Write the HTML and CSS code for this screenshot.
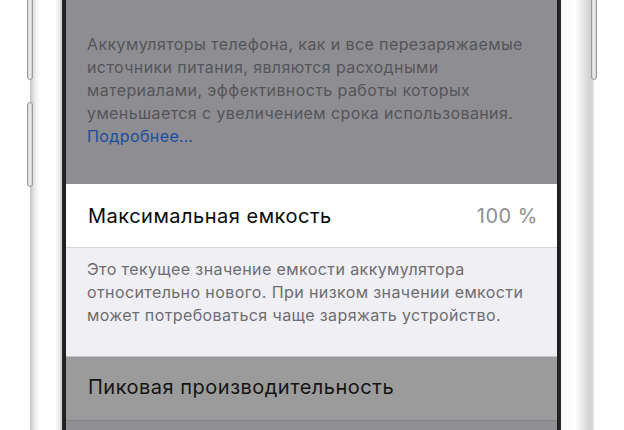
FILE: index.html
```html
<!DOCTYPE html>
<html lang="ru">
<head>
<meta charset="utf-8">
<title>Состояние аккумулятора</title>
<link rel="stylesheet" href="styles.css">
</head>
<body>
<div class="phone">
  <div class="rail rail-left">
    <div class="hw-btn hw-btn-top"></div>
    <div class="hw-btn hw-btn-mid"></div>
  </div>
  <div class="rim rim-left"></div>
  <div class="screen">
    <section class="dim-info">
      <p class="info-text">Аккумуляторы телефона, как и все перезаряжаемые источники питания, являются расходными материалами, эффективность работы которых уменьшается с увеличением срока использования.</p>
      <a class="info-link" href="#">Подробнее…</a>
    </section>
    <div class="cell cell-lit">
      <span class="cell-title">Максимальная емкость</span>
      <span class="cell-value">100 %</span>
    </div>
    <section class="footer-lit">
      <p class="footer-text">Это текущее значение емкости аккумулятора относительно нового. При низком значении емкости может потребоваться чаще заряжать устройство.</p>
    </section>
    <div class="cell cell-dim">
      <span class="cell-title">Пиковая производительность</span>
    </div>
    <div class="dim-rest"></div>
  </div>
  <div class="rim rim-right"></div>
  <div class="rail rail-right">
    <div class="hw-btn hw-btn-top"></div>
  </div>
</div>
</body>
</html>
```

FILE: styles.css
```css
* { box-sizing: border-box; }
html, body {
  margin: 0;
  padding: 0;
  background: #ffffff;
}
body {
  width: 624px;
  height: 430px;
  overflow: hidden;
  font-family: "Inter", "Roboto", "Noto Sans", sans-serif;
}
.phone {
  display: flex;
  height: 430px;
}
.rail {
  display: flex;
  flex-direction: column;
  flex: none;
}
.rail-left {
  width: 33px;
  background: linear-gradient(to right, #ffffff 0, #ffffff 30px, #c4c4c4 30px, #dcdcdc 33px);
  align-items: flex-end;
}
.rail-right {
  width: 33px;
  background: linear-gradient(to right, #d4d4d4 0, #e4e4e4 3px, #ffffff 3px);
  align-items: flex-start;
}
.hw-btn {
  width: 6px;
  border: 1px solid #9a9a9a;
  border-radius: 3px;
  background: linear-gradient(to right, #d0d0d0, #f2f2f2 50%, #c8c8c8);
}
.rail-left .hw-btn-top { height: 88px; margin-top: -8px; }
.rail-left .hw-btn-mid { height: 85px; margin-top: 22px; }
.rail-right .hw-btn-top { height: 88px; margin-top: -8px; }
.rim {
  flex: none;
  height: 100%;
}
.rim-left {
  width: 33px;
  background: linear-gradient(to right, #dedede 0, #f6f6f6 4px, #ffffff 8px, #ffffff 22px, #ececec 26px, #cfcfcf 29px, #2a2a2a 29px, #1c1c1c 33px);
}
.rim-right {
  width: 34px;
  background: linear-gradient(to right, #1c1c1c 0, #2a2a2a 4px, #f8f8f8 4px, #ffffff 18px, #eeeeee 24px, #dadada 30px, #cfcfcf 34px);
}
.screen {
  width: 491px;
  flex: none;
  display: flex;
  flex-direction: column;
  background: #8e8e93;
}
.dim-info {
  height: 184px;
  padding: 33px 16px 0 21px;
  background: #8d8d92;
}
.info-text, .footer-text {
  margin: 0;
  font-size: 16px;
  line-height: 23px;
  letter-spacing: 0.4px;
}
.info-text { color: #555559; }
.info-link {
  display: block;
  font-size: 16px;
  line-height: 23px;
  color: #1b4e9e;
  text-decoration: none;
  letter-spacing: 0.4px;
}
.cell {
  display: flex;
  align-items: center;
  justify-content: space-between;
  height: 63px;
  padding: 0 19px 0 22px;
  font-size: 20px;
  letter-spacing: 0.5px;
}
.cell-lit {
  background: #ffffff;
  border-bottom: 1px solid #d6d6da;
  height: 64px;
}
.cell-lit .cell-title { color: #0a0a0a; }
.cell-value { color: #8e8e93; }
.footer-lit {
  height: 109px;
  padding: 10px 16px 0 21px;
  background: #efeff4;
  border-bottom: 1px solid #c9c9cc;
}
.footer-text { color: #6d6d72; }
.cell-dim {
  background: #9b9b9b;
  border-bottom: 1px solid #868689;
  height: 64px;
  padding-bottom: 3px;
}
.cell-dim .cell-title { color: #141414; }
.dim-rest {
  flex: 1;
  background: #8f8f94;
}
```
